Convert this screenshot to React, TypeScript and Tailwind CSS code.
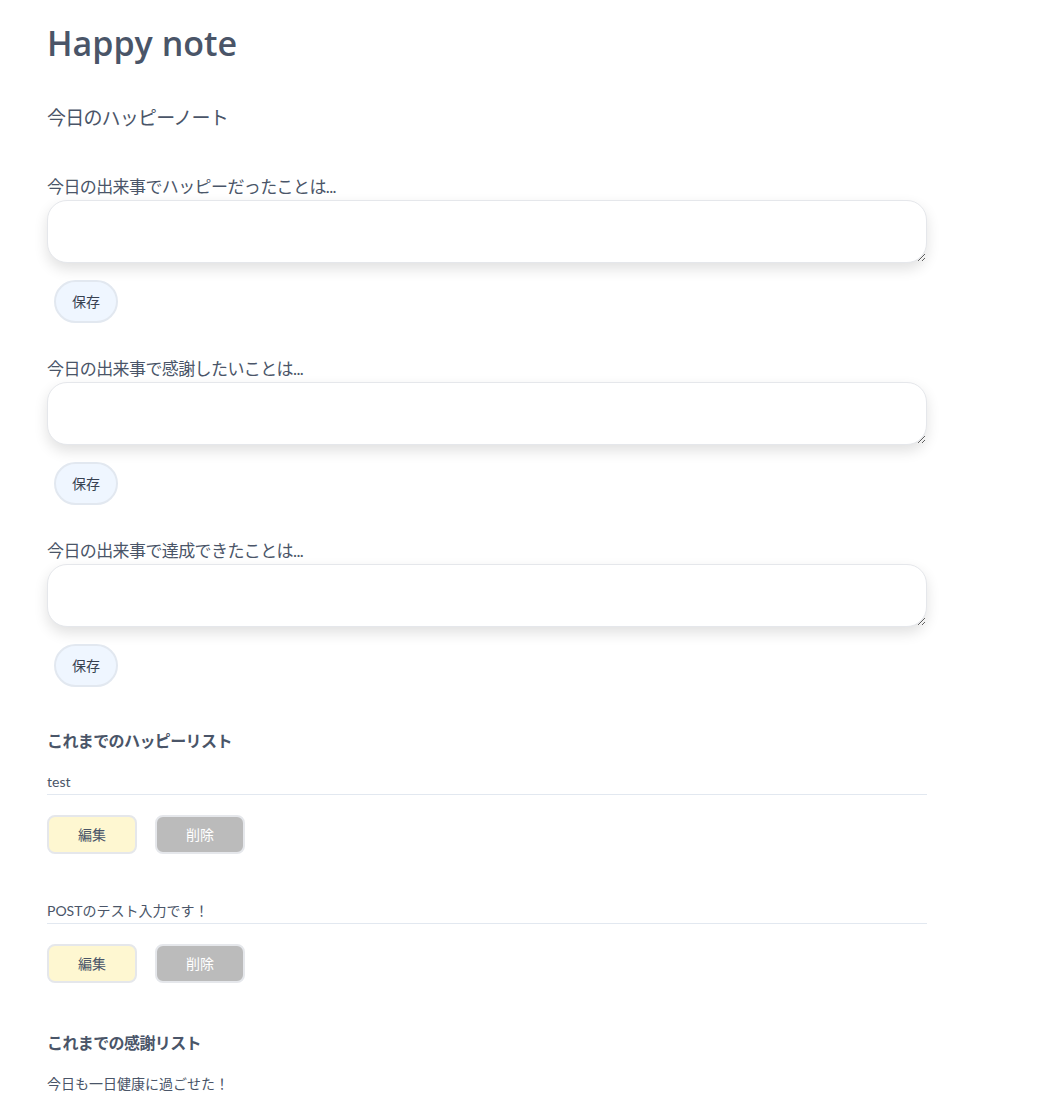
const FONT = "font-['Lato','Noto_Sans_CJK_JP',sans-serif]"

const QUESTIONS = [
  '今日の出来事でハッピーだったことは...',
  '今日の出来事で感謝したいことは...',
  '今日の出来事で達成できたことは...',
]

const HAPPY = ['test', 'POSTのテスト入力です！']

export default function App() {
  return (
    <div className={`${FONT} min-h-[1096px] bg-white text-[#4a5568]`}>
      <div className="w-[880px] pl-[47px] box-content">
        <h1 className="pt-[23px] font-['Open_Sans',sans-serif] text-[34px] font-semibold leading-[40px]">Happy note</h1>
        <h2 className="mt-[41px] text-[19px] leading-[28px] tracking-[-0.8px]">今日のハッピーノート</h2>

        <div className="mt-[42px] flex flex-col gap-[33px]">
          {QUESTIONS.map(q => (
            <div key={q}>
              <label className="block text-[17px] leading-[26px] tracking-[-0.6px]">{q}</label>
              <textarea className="block h-[63px] w-[880px] rounded-[20px] border border-[#e5e7eb] bg-white shadow-[0_6px_14px_rgba(0,0,0,0.12)] outline-none" />
              <button className="ml-[7px] mt-[17px] h-[43px] w-[64px] rounded-full border-2 border-[#e2e8f0] bg-[#eff6ff] text-[14px] text-[#374151]">
                保存
              </button>
            </div>
          ))}
        </div>

        <h3 className="mt-[41px] text-[16px] font-bold leading-[26px] tracking-[-0.6px]">これまでのハッピーリスト</h3>
        <div className="mt-[18px] flex flex-col gap-[47px]">
          {HAPPY.map(t => (
            <div key={t}>
              <p className="border-b border-[#e2e8f0] pb-[2px] text-[14px] leading-[20px]">{t}</p>
              <div className="mt-[20px] flex gap-[18px]">
                <button className="h-[39px] w-[90px] rounded-lg border-2 border-[#e5e7eb] bg-[#fef7d1] text-[14px] text-[#4a5568]">
                  編集
                </button>
                <button className="h-[39px] w-[90px] rounded-lg border-2 border-[#e5e7eb] bg-[#bbbbbb] text-[14px] text-white">
                  削除
                </button>
              </div>
            </div>
          ))}
        </div>

        <h3 className="mt-[47px] text-[16px] font-bold leading-[26px] tracking-[-0.6px]">これまでの感謝リスト</h3>
        <p className="mt-[18px] text-[14px] leading-[20px]">今日も一日健康に過ごせた！</p>
      </div>
    </div>
  )
}
